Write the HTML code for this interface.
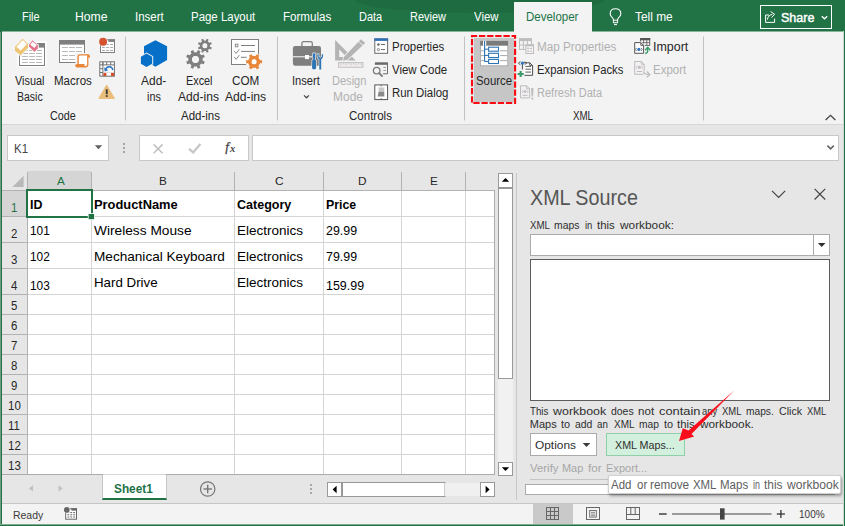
<!DOCTYPE html>
<html>
<head>
<meta charset="utf-8">
<title>Excel - XML Source</title>
<style>
*{box-sizing:border-box;margin:0;padding:0}
html,body{width:845px;height:526px;overflow:hidden}
body{font-family:"Liberation Sans",sans-serif;font-size:13px;color:#262626;background:#e6e6e6;position:relative}
.a{position:absolute}
.t{position:absolute;white-space:nowrap;line-height:1;transform-origin:0 0;display:block}
svg{position:absolute;left:0;top:0}
</style>
</head>
<body>
<div class="a" style="left:0;top:0;width:845px;height:31px;background:#217346"></div>
<div class="a" style="left:355px;top:-13px;width:250px;height:26px;border-radius:50%;background:rgba(0,0,0,0.07)"></div>
<div class="a" style="left:514px;top:2px;width:78px;height:30px;background:#f3f3f3"></div>
<div class="a" style="left:0;top:31px;width:845px;height:93px;background:#f3f3f3"></div>
<div class="a" style="left:0;top:31px;width:514px;height:1px;background:#8ab39c"></div>
<div class="a" style="left:592px;top:31px;width:253px;height:1px;background:#8ab39c"></div>
<div class="a" style="left:0;top:124px;width:845px;height:1px;background:#d6d6d6"></div>
<div class="a" style="left:471px;top:35px;width:45px;height:69px;background:#e4e9e9"></div>
<div class="a" style="left:473.5px;top:37.5px;width:40px;height:64px;background:#c6c6c6"></div>
<div class="a" style="left:7px;top:135px;width:102px;height:26px;background:#fff;border:1px solid #c8c8c8"></div>
<div class="a" style="left:139px;top:135px;width:110px;height:26px;background:#fff;border:1px solid #c8c8c8"></div>
<div class="a" style="left:252px;top:135px;width:587px;height:26px;background:#fff;border:1px solid #c8c8c8"></div>
<div class="a" style="left:28px;top:191px;width:466px;height:283px;background:#fff"></div>
<div class="a" style="left:2px;top:171px;width:492px;height:19px;background:#e6e6e6"></div>
<div class="a" style="left:28px;top:171px;width:63px;height:19px;background:#d5d5d5"></div>
<div class="a" style="left:2px;top:191px;width:25px;height:283px;background:#e6e6e6"></div>
<div class="a" style="left:2px;top:191px;width:25px;height:25px;background:#d5d5d5"></div>
<div class="a" style="left:760px;top:5px;width:72px;height:24px;border:1px solid #fff"></div>
<div class="a" style="left:102px;top:475px;width:65px;height:25px;background:#fff;border-left:1px solid #c6c6c6;border-right:1px solid #c6c6c6;border-bottom:2px solid #217346"></div>
<div class="a" style="left:0;top:503px;width:845px;height:1px;background:#c6c6c6"></div>
<div class="a" style="left:0;top:504px;width:845px;height:22px;background:#f3f3f3"></div>
<div class="a" style="left:533px;top:504px;width:40px;height:20px;background:#c9c9c9"></div>
<div class="a" style="left:530px;top:234px;width:300px;height:22px;background:#fff;border:1px solid #ababab"></div>
<div class="a" style="left:530px;top:259px;width:300px;height:142px;background:#fff;border:1px solid #5c5c5c"></div>
<div class="a" style="left:530px;top:433px;width:67px;height:23px;background:#fff;border:1px solid #ababab"></div>
<div class="a" style="left:606px;top:433px;width:79px;height:23px;background:#d3efde;border:1px solid #8fcfa9"></div>
<div class="a" style="left:525px;top:484px;width:310px;height:11px;background:#fff;border:1px solid #ababab"></div>
<svg width="845" height="526" viewBox="0 0 845 526">
<line x1="91.5" y1="191" x2="91.5" y2="474" stroke="#d4d4d4" stroke-width="1"/>
<line x1="234.5" y1="191" x2="234.5" y2="474" stroke="#d4d4d4" stroke-width="1"/>
<line x1="323.5" y1="191" x2="323.5" y2="474" stroke="#d4d4d4" stroke-width="1"/>
<line x1="401.5" y1="191" x2="401.5" y2="474" stroke="#d4d4d4" stroke-width="1"/>
<line x1="465.5" y1="191" x2="465.5" y2="474" stroke="#d4d4d4" stroke-width="1"/>
<line x1="28" y1="216.5" x2="494" y2="216.5" stroke="#d4d4d4" stroke-width="1"/>
<line x1="28" y1="242.5" x2="494" y2="242.5" stroke="#d4d4d4" stroke-width="1"/>
<line x1="28" y1="268.5" x2="494" y2="268.5" stroke="#d4d4d4" stroke-width="1"/>
<line x1="28" y1="294.5" x2="494" y2="294.5" stroke="#d4d4d4" stroke-width="1"/>
<line x1="28" y1="314.5" x2="494" y2="314.5" stroke="#d4d4d4" stroke-width="1"/>
<line x1="28" y1="334.5" x2="494" y2="334.5" stroke="#d4d4d4" stroke-width="1"/>
<line x1="28" y1="354.5" x2="494" y2="354.5" stroke="#d4d4d4" stroke-width="1"/>
<line x1="28" y1="374.5" x2="494" y2="374.5" stroke="#d4d4d4" stroke-width="1"/>
<line x1="28" y1="394.5" x2="494" y2="394.5" stroke="#d4d4d4" stroke-width="1"/>
<line x1="28" y1="414.5" x2="494" y2="414.5" stroke="#d4d4d4" stroke-width="1"/>
<line x1="28" y1="434.5" x2="494" y2="434.5" stroke="#d4d4d4" stroke-width="1"/>
<line x1="28" y1="454.5" x2="494" y2="454.5" stroke="#d4d4d4" stroke-width="1"/>
<line x1="91.5" y1="172" x2="91.5" y2="190" stroke="#b2b2b2" stroke-width="1"/>
<line x1="234.5" y1="172" x2="234.5" y2="190" stroke="#b2b2b2" stroke-width="1"/>
<line x1="323.5" y1="172" x2="323.5" y2="190" stroke="#b2b2b2" stroke-width="1"/>
<line x1="401.5" y1="172" x2="401.5" y2="190" stroke="#b2b2b2" stroke-width="1"/>
<line x1="465.5" y1="172" x2="465.5" y2="190" stroke="#b2b2b2" stroke-width="1"/>
<line x1="2" y1="216.5" x2="27" y2="216.5" stroke="#b2b2b2" stroke-width="1"/>
<line x1="2" y1="242.5" x2="27" y2="242.5" stroke="#b2b2b2" stroke-width="1"/>
<line x1="2" y1="268.5" x2="27" y2="268.5" stroke="#b2b2b2" stroke-width="1"/>
<line x1="2" y1="294.5" x2="27" y2="294.5" stroke="#b2b2b2" stroke-width="1"/>
<line x1="2" y1="314.5" x2="27" y2="314.5" stroke="#b2b2b2" stroke-width="1"/>
<line x1="2" y1="334.5" x2="27" y2="334.5" stroke="#b2b2b2" stroke-width="1"/>
<line x1="2" y1="354.5" x2="27" y2="354.5" stroke="#b2b2b2" stroke-width="1"/>
<line x1="2" y1="374.5" x2="27" y2="374.5" stroke="#b2b2b2" stroke-width="1"/>
<line x1="2" y1="394.5" x2="27" y2="394.5" stroke="#b2b2b2" stroke-width="1"/>
<line x1="2" y1="414.5" x2="27" y2="414.5" stroke="#b2b2b2" stroke-width="1"/>
<line x1="2" y1="434.5" x2="27" y2="434.5" stroke="#b2b2b2" stroke-width="1"/>
<line x1="2" y1="454.5" x2="27" y2="454.5" stroke="#b2b2b2" stroke-width="1"/>
<line x1="2" y1="474.5" x2="27" y2="474.5" stroke="#b2b2b2" stroke-width="1"/>
<line x1="2" y1="190.5" x2="495" y2="190.5" stroke="#b2b2b2" stroke-width="1"/>
<line x1="27.5" y1="172" x2="27.5" y2="475" stroke="#b2b2b2" stroke-width="1"/>
<line x1="494.5" y1="190" x2="494.5" y2="475" stroke="#ababab" stroke-width="1"/>
<line x1="2" y1="474.5" x2="495" y2="474.5" stroke="#ababab" stroke-width="1"/>
<rect x="472" y="36" width="43.1" height="67" fill="none" stroke="#fb0a12" stroke-width="2.1" stroke-dasharray="6.29 1.8656" stroke-dashoffset="1.2"/>
<polygon points="12.4,187 23.6,187 23.6,175.8" fill="#b8b8b8"/>
<rect x="27" y="190" width="65" height="27" fill="none" stroke="#217346" stroke-width="2" />
<rect x="87.8" y="213.2" width="7" height="7" fill="#fff" />
<rect x="88.6" y="214" width="5.5" height="5.2" fill="#217346" />
<line x1="125.5" y1="36.5" x2="125.5" y2="120.5" stroke="#c2c2c2" stroke-width="1"/>
<line x1="277.5" y1="36.5" x2="277.5" y2="120.5" stroke="#c2c2c2" stroke-width="1"/>
<line x1="464.5" y1="36.5" x2="464.5" y2="120.5" stroke="#c2c2c2" stroke-width="1"/>
<line x1="703.5" y1="36.5" x2="703.5" y2="120.5" stroke="#c2c2c2" stroke-width="1"/>
<rect x="498.5" y="173.5" width="14" height="14" fill="#fff" stroke="#999" stroke-width="1" />
<polygon points="501.8,181.8 509.2,181.8 505.5,178" fill="#000"/>
<rect x="498.5" y="188.5" width="14" height="190" fill="#fff" stroke="#999" stroke-width="1" />
<rect x="498" y="379" width="15" height="83" fill="#f1f1f1" />
<rect x="498.5" y="462.5" width="14" height="13" fill="#fff" stroke="#999" stroke-width="1" />
<polygon points="501.8,467.2 509.2,467.2 505.5,471" fill="#000"/>
<line x1="516.5" y1="173" x2="516.5" y2="500" stroke="#c8c8c8" stroke-width="1"/>
<rect x="327.5" y="482.5" width="14" height="14" fill="#fff" stroke="#999" stroke-width="1" />
<polygon points="336.6,485.8 336.6,493.2 332.6,489.5" fill="#000"/>
<rect x="342.5" y="482.5" width="102.5" height="14" fill="#fff" stroke="#999" stroke-width="1" />
<rect x="445" y="483" width="35" height="13" fill="#f0f0f0" />
<rect x="480.5" y="482.5" width="14" height="14" fill="#fff" stroke="#999" stroke-width="1" />
<polygon points="485.6,485.8 485.6,493.2 489.6,489.5" fill="#000"/>
<line x1="103" y1="474.5" x2="166" y2="474.5" stroke="#d6d6d6" stroke-width="1"/>
<polygon points="33,485.3 33,491.5 28.8,488.4" fill="#c0c0c0"/>
<polygon points="58.5,485.3 58.5,491.5 62.7,488.4" fill="#c0c0c0"/>
<circle cx="207.7" cy="489" r="7.2" fill="none" stroke="#767676" stroke-width="1.2"/>
<line x1="203.5" y1="489" x2="212" y2="489" stroke="#767676" stroke-width="1.4"/>
<line x1="207.7" y1="484.8" x2="207.7" y2="493.2" stroke="#767676" stroke-width="1.4"/>
<line x1="813.5" y1="235" x2="813.5" y2="255" stroke="#ababab" stroke-width="1"/>
<polygon points="817.9,243 825.5,243 821.7,247" fill="#2e2e2e"/>
<polygon points="582.7,443 590.3,443 586.5,447" fill="#3b3b3b"/>
<line x1="530" y1="479.5" x2="830" y2="479.5" stroke="#c4c4c4" stroke-width="1"/>
<rect x="18.5" y="42.5" width="27" height="23.5" fill="#fff" stroke="#fff" stroke-width="2"/>
<rect x="19.5" y="43.5" width="25" height="22" fill="#fff" stroke="#7f7f7f" stroke-width="1"/>
<rect x="38.4" y="43" width="6.6" height="4.6" fill="#7f7f7f"/>
<line x1="22" y1="50.5" x2="27.8" y2="50.5" stroke="#b8b8b8" stroke-width="1"/>
<line x1="29.2" y1="50.5" x2="34.9" y2="50.5" stroke="#b8b8b8" stroke-width="1"/>
<line x1="36.1" y1="50.5" x2="42" y2="50.5" stroke="#b8b8b8" stroke-width="1"/>
<line x1="22" y1="53.5" x2="27.8" y2="53.5" stroke="#b8b8b8" stroke-width="1"/>
<line x1="29.2" y1="53.5" x2="34.9" y2="53.5" stroke="#b8b8b8" stroke-width="1"/>
<line x1="36.1" y1="53.5" x2="42" y2="53.5" stroke="#b8b8b8" stroke-width="1"/>
<line x1="22" y1="56.5" x2="27.8" y2="56.5" stroke="#b8b8b8" stroke-width="1"/>
<line x1="29.2" y1="56.5" x2="34.9" y2="56.5" stroke="#b8b8b8" stroke-width="1"/>
<line x1="36.1" y1="56.5" x2="42" y2="56.5" stroke="#b8b8b8" stroke-width="1"/>
<line x1="22" y1="59.5" x2="27.8" y2="59.5" stroke="#b8b8b8" stroke-width="1"/>
<line x1="29.2" y1="59.5" x2="34.9" y2="59.5" stroke="#b8b8b8" stroke-width="1"/>
<line x1="36.1" y1="59.5" x2="42" y2="59.5" stroke="#b8b8b8" stroke-width="1"/>
<line x1="22" y1="62.5" x2="27.8" y2="62.5" stroke="#b8b8b8" stroke-width="1"/>
<line x1="29.2" y1="62.5" x2="34.9" y2="62.5" stroke="#b8b8b8" stroke-width="1"/>
<line x1="36.1" y1="62.5" x2="42" y2="62.5" stroke="#b8b8b8" stroke-width="1"/>
<polygon points="15.00,46.80 22.60,38.80 28.10,43.90 28.10,47.80 20.65,55.30 15.00,50.70" fill="#f3f3f3" stroke="#f3f3f3" stroke-width="1.6"/>
<polygon points="15.00,46.80 22.60,38.80 28.10,43.90 28.10,47.80 20.65,55.30 15.00,50.70" fill="#eec572"/>
<polygon points="16.40,46.70 22.60,40.00 27.00,44.00 20.65,50.40" fill="#fff"/>
<polygon points="29.00,44.65 32.40,40.25 37.80,45.00 37.80,48.20 34.50,51.90 29.00,46.40" fill="#f3f3f3" stroke="#fff" stroke-width="1.4"/>
<polygon points="29.00,44.65 32.40,40.25 37.80,45.00 37.80,48.20 34.50,51.90 29.00,46.40" fill="#e5708b"/>
<polygon points="30.20,44.70 32.50,41.60 36.80,45.10 34.40,47.90" fill="#fff"/>
<rect x="59.5" y="40.5" width="25" height="22" fill="#fff" stroke="#7f7f7f"/>
<rect x="59" y="40" width="26" height="4.6" fill="#7f7f7f"/>
<line x1="62" y1="47.5" x2="67.9" y2="47.5" stroke="#b8b8b8" stroke-width="1"/>
<line x1="69" y1="47.5" x2="74.9" y2="47.5" stroke="#b8b8b8" stroke-width="1"/>
<line x1="76" y1="47.5" x2="82" y2="47.5" stroke="#b8b8b8" stroke-width="1"/>
<line x1="62" y1="51.5" x2="67.9" y2="51.5" stroke="#b8b8b8" stroke-width="1"/>
<line x1="69" y1="51.5" x2="74.9" y2="51.5" stroke="#b8b8b8" stroke-width="1"/>
<line x1="76" y1="51.5" x2="82" y2="51.5" stroke="#b8b8b8" stroke-width="1"/>
<line x1="62" y1="55.5" x2="67.9" y2="55.5" stroke="#b8b8b8" stroke-width="1"/>
<line x1="69" y1="55.5" x2="74.9" y2="55.5" stroke="#b8b8b8" stroke-width="1"/>
<line x1="76" y1="55.5" x2="82" y2="55.5" stroke="#b8b8b8" stroke-width="1"/>
<line x1="62" y1="59.5" x2="67.9" y2="59.5" stroke="#b8b8b8" stroke-width="1"/>
<line x1="69" y1="59.5" x2="74.9" y2="59.5" stroke="#b8b8b8" stroke-width="1"/>
<line x1="76" y1="59.5" x2="82" y2="59.5" stroke="#b8b8b8" stroke-width="1"/>
<rect x="75.5" y="53" width="15.5" height="15.5" fill="#f3f3f3"/>
<path d="M77.4 56.4 Q77.4 54.2 79.6 54.2 L88 54.2 Q90 54.2 90 56.2 L90 57.6 L88.4 57.6 L88.4 65 Q88.4 67.4 86 67.4 L77 67.4 Q75.1 67.4 75.1 65.6 Q75.1 64 77 64 L77.4 64 Z" fill="#e8873a"/>
<path d="M78.8 57 Q78.8 55.6 80.2 55.6 L87.1 55.6 L87.1 64.6 Q87.1 66 85.8 66 L84.4 66 Q85 65.2 84.4 64 L78.8 64 Z" fill="#fff"/>
<rect x="100.5" y="39.8" width="14" height="12.7" fill="#fff" stroke="#7f7f7f"/>
<rect x="108.3" y="39.3" width="6.7" height="2.6" fill="#7f7f7f"/>
<line x1="102" y1="44.5" x2="104.8" y2="44.5" stroke="#a8a8a8" stroke-width="1"/>
<line x1="106.2" y1="44.5" x2="108.8" y2="44.5" stroke="#a8a8a8" stroke-width="1"/>
<line x1="110.1" y1="44.5" x2="113" y2="44.5" stroke="#a8a8a8" stroke-width="1"/>
<line x1="102" y1="47.5" x2="104.8" y2="47.5" stroke="#a8a8a8" stroke-width="1"/>
<line x1="106.2" y1="47.5" x2="108.8" y2="47.5" stroke="#a8a8a8" stroke-width="1"/>
<line x1="110.1" y1="47.5" x2="113" y2="47.5" stroke="#a8a8a8" stroke-width="1"/>
<line x1="102" y1="50.5" x2="104.8" y2="50.5" stroke="#a8a8a8" stroke-width="1"/>
<line x1="106.2" y1="50.5" x2="108.8" y2="50.5" stroke="#a8a8a8" stroke-width="1"/>
<line x1="110.1" y1="50.5" x2="113" y2="50.5" stroke="#a8a8a8" stroke-width="1"/>
<circle cx="103.1" cy="41.8" r="4.7" fill="#f3f3f3"/>
<circle cx="103.1" cy="41.8" r="3.95" fill="#d5532f"/>
<rect x="99.8" y="61.8" width="14.6" height="14.4" fill="#fff" stroke="#707070"/>
<line x1="102.9" y1="62" x2="102.9" y2="65" stroke="#707070"/>
<line x1="106.7" y1="62" x2="106.7" y2="65" stroke="#707070"/>
<line x1="110.7" y1="62" x2="110.7" y2="65" stroke="#707070"/>
<line x1="100" y1="64.9" x2="114.5" y2="64.9" stroke="#707070"/>
<line x1="102.9" y1="62" x2="102.9" y2="76" stroke="#707070"/>
<line x1="100" y1="68.7" x2="103" y2="68.7" stroke="#707070"/>
<line x1="100" y1="72.5" x2="103" y2="72.5" stroke="#707070"/>
<rect x="103.4" y="72.9" width="3" height="3" fill="#d84a20"/>
<rect x="111" y="72.9" width="3" height="3" fill="#d84a20"/>
<line x1="103.4" y1="72.6" x2="114" y2="72.6" stroke="#c8c8c8" stroke-width="0.6"/>
<path d="M105.3 69.7 Q106.5 66.6 109.5 66.7 Q112.3 66.9 112.9 70.2" fill="none" stroke="#2e74c0" stroke-width="1.5"/>
<polygon points="104.2,67.3 104.6,71.4 108.3,70.3" fill="#2e74c0"/>
<path d="M106.65 85.6 L114.1 98.3 L99.2 98.3 Z" fill="#eabe7a" stroke="#eabe7a" stroke-width="1.4" stroke-linejoin="round"/>
<rect x="105.8" y="89.3" width="1.9" height="4.9" fill="#3a3a3a"/>
<rect x="105.8" y="95.2" width="1.9" height="1.7" fill="#3a3a3a"/>
<polygon points="155.40,40.15 167.10,46.30 167.10,60.00 155.40,66.70 144.00,60.00 144.00,46.30" fill="#0670c9"/>
<polygon points="146.50,53.60 152.20,56.80 152.20,63.70 146.50,67.00 140.90,63.70 140.90,56.80" fill="#f3f3f3" stroke="#f3f3f3" stroke-width="2"/>
<polygon points="146.50,53.60 152.20,56.80 152.20,63.70 146.50,67.00 140.90,63.70 140.90,56.80" fill="#0670c9"/>
<path d="M202.40 60.60 L204.80 61.79 L203.76 64.29 L201.23 63.43 L199.53 65.13 L200.39 67.66 L197.89 68.70 L196.70 66.30 L194.30 66.30 L193.11 68.70 L190.61 67.66 L191.47 65.13 L189.77 63.43 L187.24 64.29 L186.20 61.79 L188.60 60.60 L188.60 58.20 L186.20 57.01 L187.24 54.51 L189.77 55.37 L191.47 53.67 L190.61 51.14 L193.11 50.10 L194.30 52.50 L196.70 52.50 L197.89 50.10 L200.39 51.14 L199.53 53.67 L201.23 55.37 L203.76 54.51 L204.80 57.01 L202.40 58.20Z M199.20 59.40 A3.7 3.7 0 1 0 191.80 59.40 A3.7 3.7 0 1 0 199.20 59.40Z" fill="#7f7f7f" fill-rule="evenodd"/>
<circle cx="195.5" cy="59.4" r="5.35" fill="none" stroke="#7f7f7f" stroke-width="3.30"/>
<path d="M209.92 46.68 L211.87 47.59 L211.10 49.47 L209.07 48.73 L207.83 49.97 L208.57 52.00 L206.69 52.77 L205.78 50.82 L204.02 50.82 L203.11 52.77 L201.23 52.00 L201.97 49.97 L200.73 48.73 L198.70 49.47 L197.93 47.59 L199.88 46.68 L199.88 44.92 L197.93 44.01 L198.70 42.13 L200.73 42.87 L201.97 41.63 L201.23 39.60 L203.11 38.83 L204.02 40.78 L205.78 40.78 L206.69 38.83 L208.57 39.60 L207.83 41.63 L209.07 42.87 L211.10 42.13 L211.87 44.01 L209.92 44.92Z M207.60 45.80 A2.7 2.7 0 1 0 202.20 45.80 A2.7 2.7 0 1 0 207.60 45.80Z" fill="#7f7f7f" fill-rule="evenodd"/>
<circle cx="204.9" cy="45.8" r="3.90" fill="none" stroke="#7f7f7f" stroke-width="2.40"/>
<rect x="231.5" y="39.5" width="27" height="25" fill="#fff" stroke="#7f7f7f"/>
<rect x="235.3" y="44.2" width="2.6" height="2.6" fill="none" stroke="#7f7f7f" stroke-width="0.9"/>
<line x1="241" y1="45.5" x2="255" y2="45.5" stroke="#7f7f7f" stroke-width="1"/>
<line x1="241" y1="51.4" x2="255" y2="51.4" stroke="#7f7f7f" stroke-width="1"/>
<line x1="241" y1="57.3" x2="246.7" y2="57.3" stroke="#7f7f7f" stroke-width="1"/>
<polyline points="234.2,51.0 236.1,53.4 239.3,49.3" fill="none" stroke="#7f7f7f" stroke-width="0.9"/>
<polyline points="234.2,56.9 236.1,59.3 239.3,55.2" fill="none" stroke="#7f7f7f" stroke-width="0.9"/>
<circle cx="254.1" cy="61.75" r="8.6" fill="#f3f3f3"/>
<rect x="247" y="54" width="11.4" height="10" fill="#fff"/>
<path d="M247 64.5 L247 53.8 L258.5 53.8" fill="none" stroke="none"/>
<path d="M259.78 60.16 L262.07 60.32 L262.07 63.18 L259.78 63.34 L258.32 65.88 L259.33 67.94 L256.84 69.37 L255.57 67.46 L252.63 67.46 L251.36 69.37 L248.87 67.94 L249.88 65.88 L248.42 63.34 L246.13 63.18 L246.13 60.32 L248.42 60.16 L249.88 57.62 L248.87 55.56 L251.36 54.13 L252.63 56.04 L255.57 56.04 L256.84 54.13 L259.33 55.56 L258.32 57.62Z M256.80 61.75 A2.7 2.7 0 1 0 251.40 61.75 A2.7 2.7 0 1 0 256.80 61.75Z" fill="#e8873a" fill-rule="evenodd"/>
<circle cx="254.1" cy="61.75" r="4.30" fill="none" stroke="#e8873a" stroke-width="3.20"/>
<path d="M301.9 46.6 L301.9 43.4 Q301.9 41.7 303.6 41.7 L310.6 41.7 Q312.3 41.7 312.3 43.4 L312.3 46.6" fill="none" stroke="#7f7f7f" stroke-width="1.3"/>
<rect x="292.9" y="46.1" width="28.1" height="19.6" rx="2.2" fill="#7f7f7f"/>
<line x1="292.9" y1="56.8" x2="312" y2="56.8" stroke="#fff" stroke-width="1"/>
<rect x="305" y="55" width="4" height="4.1" fill="#fff"/>
<rect x="311" y="52.8" width="13" height="17.2" fill="#f3f3f3" opacity="0"/>
<path d="M312.6 54.2 L313.4 53.2 L314.8 53.2 L315.6 54.2 L315.2 56.4 L314.9 59.6 L316 60.6 L316.2 67.8 Q316.2 69.5 314.1 69.5 Q312 69.5 312 67.8 L312.2 60.6 L313.3 59.6 L313 56.4 Z" fill="#2f75b5" stroke="#f3f3f3" stroke-width="1.2" paint-order="stroke"/>
<path d="M317.3 54.2 Q317 58 319.3 59.2 L319.3 69.5 L321.2 69.5 L321.2 59.2 Q323.4 58 323.1 54.2 L321.8 54.2 L321.8 56.8 L320.25 57.8 L318.7 56.8 L318.7 54.2 Z" fill="#2f75b5" stroke="#f3f3f3" stroke-width="1.2" paint-order="stroke"/>
<path d="M335.1 39.9 L335.1 60.5 L355.7 60.5 Z M339.2 49.4 L346.6 57 L339.2 57 Z" fill="#b4b4b4" fill-rule="evenodd"/>
<path d="M342.9 60.7 L343.9 57 L360.9 39.2 L365.2 43 L347.4 59.7 Z" fill="#b4b4b4" stroke="#f3f3f3" stroke-width="1.5" paint-order="stroke"/>
<line x1="358.4" y1="41.4" x2="363" y2="45.4" stroke="#f3f3f3" stroke-width="0.9"/>
<rect x="338.5" y="62.5" width="24.5" height="4.8" fill="#efeaee" stroke="#c4c4c4"/>
<line x1="340.80" y1="63" x2="340.80" y2="65.4" stroke="#c4c4c4" stroke-width="0.9"/>
<line x1="343.35" y1="63" x2="343.35" y2="64.4" stroke="#c4c4c4" stroke-width="0.9"/>
<line x1="345.90" y1="63" x2="345.90" y2="65.4" stroke="#c4c4c4" stroke-width="0.9"/>
<line x1="348.45" y1="63" x2="348.45" y2="64.4" stroke="#c4c4c4" stroke-width="0.9"/>
<line x1="351.00" y1="63" x2="351.00" y2="65.4" stroke="#c4c4c4" stroke-width="0.9"/>
<line x1="353.55" y1="63" x2="353.55" y2="64.4" stroke="#c4c4c4" stroke-width="0.9"/>
<line x1="356.10" y1="63" x2="356.10" y2="65.4" stroke="#c4c4c4" stroke-width="0.9"/>
<line x1="358.65" y1="63" x2="358.65" y2="64.4" stroke="#c4c4c4" stroke-width="0.9"/>
<line x1="361.20" y1="63" x2="361.20" y2="65.4" stroke="#c4c4c4" stroke-width="0.9"/>
<rect x="374.8" y="38.9" width="12.8" height="14.4" fill="#fff" stroke="#6a6a6a"/>
<rect x="374.3" y="38.4" width="13.8" height="2.5" fill="#2f6fb5"/>
<circle cx="378.4" cy="44.5" r="1.3" fill="#6a6a6a"/>
<circle cx="378.4" cy="49.6" r="1.1" fill="#fff" stroke="#6a6a6a" stroke-width="0.8"/>
<line x1="380.9" y1="44.5" x2="385" y2="44.5" stroke="#6a6a6a"/>
<line x1="380.9" y1="49.6" x2="385" y2="49.6" stroke="#6a6a6a"/>
<path d="M375 64 L387.5 64 L387.5 73.8 L383 73.8" fill="none" stroke="#6a6a6a" stroke-width="1"/>
<rect x="374.9" y="62.3" width="13.1" height="2.3" fill="#6a6a6a"/>
<line x1="383.3" y1="67.4" x2="386" y2="67.4" stroke="#9a9a9a"/>
<line x1="383.3" y1="70.4" x2="386" y2="70.4" stroke="#9a9a9a"/>
<circle cx="376.7" cy="70.6" r="3.3" fill="#f3f3f3" stroke="#7a7a7a" stroke-width="1.3"/>
<line x1="379.2" y1="73.2" x2="382" y2="76" stroke="#7a7a7a" stroke-width="1.8" stroke-linecap="round"/>
<rect x="374.8" y="84.9" width="12.8" height="14.7" fill="#fff" stroke="#555"/>
<line x1="381.2" y1="85" x2="381.2" y2="86.3" stroke="#555" stroke-width="0.9"/>
<line x1="381.2" y1="98.2" x2="381.2" y2="99.5" stroke="#555" stroke-width="0.9"/>
<rect x="378.6" y="87.4" width="5.7" height="4.4" fill="#c9c9c9"/>
<path d="M378.6 91.8 L384.3 91.8 L384.3 96.4 L377.6 96.4 Z" fill="#8a8a8a"/>
<rect x="480.4" y="41.2" width="27.4" height="24.6" fill="#fff" stroke="#a0a0a0" stroke-width="0.8"/>
<rect x="480.2" y="41" width="27.8" height="4.7" fill="#7a7a7a"/>
<rect x="483" y="40.8" width="3.2" height="5" fill="#fff"/>
<line x1="480.8" y1="50.8" x2="484" y2="50.8" stroke="#a0a0a0" stroke-width="0.9"/>
<line x1="500" y1="50.8" x2="507.4" y2="50.8" stroke="#a0a0a0" stroke-width="0.9"/>
<line x1="480.8" y1="55.6" x2="484" y2="55.6" stroke="#a0a0a0" stroke-width="0.9"/>
<line x1="500" y1="55.6" x2="507.4" y2="55.6" stroke="#a0a0a0" stroke-width="0.9"/>
<line x1="480.8" y1="60.6" x2="484" y2="60.6" stroke="#a0a0a0" stroke-width="0.9"/>
<line x1="500" y1="60.6" x2="507.4" y2="60.6" stroke="#a0a0a0" stroke-width="0.9"/>
<line x1="484.6" y1="41" x2="484.6" y2="61.6" stroke="#2e74b5" stroke-width="1.1"/>
<line x1="484.6" y1="49.20" x2="488.6" y2="49.20" stroke="#2e74b5" stroke-width="1.1"/>
<rect x="488.6" y="47.2" width="9.9" height="4.0" fill="#fff" stroke="#2e74b5" stroke-width="1.1"/>
<line x1="484.6" y1="55.40" x2="488.6" y2="55.40" stroke="#2e74b5" stroke-width="1.1"/>
<rect x="488.6" y="53.3" width="9.9" height="4.2" fill="#fff" stroke="#2e74b5" stroke-width="1.1"/>
<line x1="484.6" y1="61.45" x2="488.6" y2="61.45" stroke="#2e74b5" stroke-width="1.1"/>
<rect x="488.6" y="59.4" width="9.9" height="4.1" fill="#fff" stroke="#2e74b5" stroke-width="1.1"/>
<rect x="519.5" y="38.8" width="12" height="10.6" fill="#f3f3f3" stroke="#bdbdbd"/>
<rect x="519" y="38.3" width="13" height="2.8" fill="#bdbdbd"/>
<line x1="523.4" y1="41" x2="523.4" y2="49.4" stroke="#bdbdbd"/>
<line x1="519.5" y1="45" x2="525" y2="45" stroke="#bdbdbd"/>
<line x1="527.5" y1="41" x2="527.5" y2="44" stroke="#bdbdbd"/>
<rect x="525.9" y="44.9" width="7.6" height="8.6" fill="#f6f2f6" stroke="#bdbdbd"/>
<rect x="525.4" y="44.4" width="8.6" height="1.9" fill="#bdbdbd"/>
<rect x="527.3" y="47.6" width="1.5" height="1.5" fill="#bdbdbd"/>
<rect x="527.3" y="50.4" width="1.5" height="1.5" fill="#bdbdbd"/>
<line x1="529.6" y1="48.4" x2="532" y2="48.4" stroke="#bdbdbd"/>
<line x1="529.6" y1="51.2" x2="532" y2="51.2" stroke="#bdbdbd"/>
<path d="M524 63.2 L524 62.8 L529.8 62.8 L532.6 65.6 L532.6 75.3 L524.4 75.3" fill="#fff" stroke="#4a4a4a" stroke-width="1"/>
<path d="M529.8 62.8 L529.8 65.6 L532.6 65.6" fill="none" stroke="#4a4a4a" stroke-width="0.9"/>
<line x1="525.4" y1="66.4" x2="531" y2="66.4" stroke="#4a4a4a" stroke-width="0.9"/>
<line x1="525.4" y1="69.2" x2="531" y2="69.2" stroke="#4a4a4a" stroke-width="0.9"/>
<line x1="525.4" y1="72.1" x2="531" y2="72.1" stroke="#4a4a4a" stroke-width="0.9"/>
<line x1="522.4" y1="64" x2="522.4" y2="69.4" stroke="#4a4a4a" stroke-width="1"/>
<polyline points="520.4,61.6 518.4,63.2 520.4,64.8" fill="none" stroke="#4a4a4a" stroke-width="0.9"/>
<polyline points="524.6,61.6 526.6,63.2 524.6,64.8" fill="none" stroke="#4a4a4a" stroke-width="0.9"/>
<circle cx="522.4" cy="63.1" r="1.7" fill="#2e74c0"/>
<path d="M519.6 71 h2.1 v2 h2 v2.1 h-2 v2 h-2.1 v-2 h-2 v-2.1 h2 Z" fill="#3a9a6a"/>
<path d="M520.5 85.8 L526.6 85.8 L529.6 88.8 L529.6 97.9 L520.5 97.9 Z" fill="#f3eff3" stroke="#bdbdbd"/>
<path d="M526.6 85.8 L526.6 88.8 L529.6 88.8" fill="none" stroke="#bdbdbd" stroke-width="0.9"/>
<circle cx="525" cy="91.6" r="1.4" fill="#bdbdbd"/>
<polyline points="523,90.2 521.8,91.6 523,93" fill="none" stroke="#bdbdbd" stroke-width="0.8"/>
<polyline points="527,90.2 528.2,91.6 527,93" fill="none" stroke="#bdbdbd" stroke-width="0.8"/>
<line x1="522.6" y1="95.4" x2="527.4" y2="95.4" stroke="#bdbdbd"/>
<path d="M531.1 88 L533.5 88 L533.1 96.6 L531.5 96.6 Z" fill="#bdbdbd"/>
<rect x="531.4" y="97.7" width="1.9" height="1.8" fill="#bdbdbd"/>
<rect x="640.7" y="38.5" width="9" height="6.8" fill="#fff" stroke="#555" stroke-width="0.9"/>
<rect x="640.2" y="38" width="10" height="2.3" fill="#555"/>
<line x1="643.6" y1="40" x2="643.6" y2="45.3" stroke="#555" stroke-width="0.8"/>
<line x1="646.8" y1="40" x2="646.8" y2="45.3" stroke="#555" stroke-width="0.8"/>
<line x1="640.7" y1="42.6" x2="649.7" y2="42.6" stroke="#555" stroke-width="0.8"/>
<path d="M634.7 42.6 L640.8 42.6 L643.6 45.4 L643.6 53.3 L634.7 53.3 Z" fill="#fff" stroke="#f3f3f3" stroke-width="2.4"/>
<path d="M634.7 42.6 L640.8 42.6 L643.6 45.4 L643.6 53.3 L634.7 53.3 Z" fill="#fff" stroke="#555" stroke-width="1"/>
<path d="M640.8 42.6 L640.8 45.4 L643.6 45.4" fill="none" stroke="#555" stroke-width="0.9"/>
<circle cx="638.9" cy="49.4" r="1.6" fill="#2e74c0"/>
<polyline points="636.6,47.9 635.6,49.4 636.6,50.9" fill="none" stroke="#555" stroke-width="0.8"/>
<polyline points="641.2,47.9 642.2,49.4 641.2,50.9" fill="none" stroke="#555" stroke-width="0.8"/>
<path d="M645.2 53.5 Q647.7 53.2 647.7 50.8 L647.7 47.8" fill="none" stroke="#3a9a6a" stroke-width="1.4"/>
<polyline points="645.1,50.2 647.7,47.2 650.3,50.2" fill="none" stroke="#3a9a6a" stroke-width="1.4"/>
<path d="M634.7 61.5 L641.4 61.5 L644.2 64.3 L644.2 74.3 L634.7 74.3 Z" fill="#f3eff3" stroke="#bdbdbd"/>
<path d="M641.4 61.5 L641.4 64.3 L644.2 64.3" fill="none" stroke="#bdbdbd" stroke-width="0.9"/>
<circle cx="639.4" cy="67.2" r="1.5" fill="#bdbdbd"/>
<polyline points="637.2,65.7 636.2,67.2 637.2,68.7" fill="none" stroke="#bdbdbd" stroke-width="0.8"/>
<polyline points="641.6,65.7 642.6,67.2 641.6,68.7" fill="none" stroke="#bdbdbd" stroke-width="0.8"/>
<line x1="637" y1="71.5" x2="642" y2="71.5" stroke="#bdbdbd"/>
<path d="M643.4 71.6 Q644 74.4 648.8 74.4" fill="none" stroke="#f3f3f3" stroke-width="3"/>
<path d="M643.4 71.6 Q644 74.4 648.8 74.4" fill="none" stroke="#bdbdbd" stroke-width="1.3"/>
<polyline points="646.8,71.6 649.8,74.4 646.8,77.2" fill="none" stroke="#bdbdbd" stroke-width="1.3"/>
<polyline points="825.6,120 830.5,115.4 835.4,120" fill="none" stroke="#444" stroke-width="1.3"/>
<polyline points="304,95.4 306.5,97.8 309,95.4" fill="none" stroke="#444" stroke-width="1.2"/>
<path d="M613.4 20.2 L613.4 19.4 Q612.6 17.6 611.4 16.6 Q610.2 15.4 610.2 13.8 Q610.2 8.8 615.5 8.8 Q620.8 8.8 620.8 13.8 Q620.8 15.4 619.6 16.6 Q618.4 17.6 617.6 19.4 L617.6 20.2" fill="none" stroke="#fff" stroke-width="1.1"/>
<rect x="613.4" y="20.2" width="4.2" height="2.5" fill="none" stroke="#fff" stroke-width="1"/>
<line x1="614" y1="24.6" x2="617" y2="24.6" stroke="#fff" stroke-width="1"/>
<path d="M769 15 L765.6 15 L765.6 22.4 L774.6 22.4 L774.6 18.6" fill="none" stroke="#fff" stroke-width="1"/>
<path d="M767.4 19.6 Q767.8 15.2 772.4 14.4" fill="none" stroke="#fff" stroke-width="1"/>
<polyline points="770.6,11.6 774.6,14.2 771.6,17.6" fill="none" stroke="#fff" stroke-width="1"/>
<polyline points="821.8,16.2 824.5,18.8 827.2,16.2" fill="none" stroke="#fff" stroke-width="1.3"/>
<polygon points="94.8,145.2 102.2,145.2 98.5,149.2" fill="#606060"/>
<rect x="123" y="143" width="2" height="2" fill="#a3a3a3"/>
<rect x="123" y="147" width="2" height="2" fill="#a3a3a3"/>
<rect x="123" y="151" width="2" height="2" fill="#a3a3a3"/>
<path d="M153.6 144.4 L162.6 153.2 M162.6 144.4 L153.6 153.2" stroke="#c0c0c0" stroke-width="1.5" fill="none"/>
<polyline points="189,148.8 193.2,152.4 200.4,144" fill="none" stroke="#c6c6c6" stroke-width="2.3"/>
<polyline points="827.4,145.6 830.6,148.8 833.8,145.6" fill="none" stroke="#666" stroke-width="1.6"/>
<rect x="310" y="484" width="2" height="2" fill="#a8a8a8"/>
<rect x="310" y="488" width="2" height="2" fill="#a8a8a8"/>
<rect x="310" y="492" width="2" height="2" fill="#a8a8a8"/>
<rect x="65.7" y="508.8" width="10.8" height="10.4" fill="#fff" stroke="#666"/>
<rect x="71.4" y="508.3" width="5.6" height="2.3" fill="#666"/>
<rect x="67.4" y="512.1" width="1.9" height="1" fill="#666"/>
<rect x="70.3" y="512.1" width="1.9" height="1" fill="#666"/>
<rect x="73.2" y="512.1" width="1.9" height="1" fill="#666"/>
<rect x="67.4" y="514.3" width="1.9" height="1" fill="#666"/>
<rect x="70.3" y="514.3" width="1.9" height="1" fill="#666"/>
<rect x="73.2" y="514.3" width="1.9" height="1" fill="#666"/>
<rect x="67.4" y="516.5" width="1.9" height="1" fill="#666"/>
<rect x="70.3" y="516.5" width="1.9" height="1" fill="#666"/>
<rect x="73.2" y="516.5" width="1.9" height="1" fill="#666"/>
<circle cx="66.8" cy="509.9" r="3.3" fill="#f3f3f3"/>
<circle cx="66.8" cy="509.9" r="2.8" fill="#666"/>
<rect x="546.5" y="507.5" width="12" height="12" fill="none" stroke="#666"/>
<line x1="550.5" y1="507.5" x2="550.5" y2="519.5" stroke="#666"/>
<line x1="554.5" y1="507.5" x2="554.5" y2="519.5" stroke="#666"/>
<line x1="546.5" y1="511.5" x2="558.5" y2="511.5" stroke="#666"/>
<line x1="546.5" y1="515.5" x2="558.5" y2="515.5" stroke="#666"/>
<rect x="586.5" y="507.5" width="13" height="12" fill="none" stroke="#666"/>
<rect x="589.7" y="510.5" width="6.6" height="6.6" fill="none" stroke="#666" stroke-width="0.9"/>
<line x1="591" y1="512.4" x2="595" y2="512.4" stroke="#666" stroke-width="0.7"/>
<line x1="591" y1="514" x2="595" y2="514" stroke="#666" stroke-width="0.7"/>
<line x1="591" y1="515.6" x2="595" y2="515.6" stroke="#666" stroke-width="0.7"/>
<rect x="626.5" y="507.5" width="13" height="12" fill="none" stroke="#666"/>
<line x1="626.5" y1="514.5" x2="639.5" y2="514.5" stroke="#666"/>
<line x1="630.8" y1="507.5" x2="630.8" y2="514.5" stroke="#666"/>
<line x1="635.2" y1="507.5" x2="635.2" y2="514.5" stroke="#666"/>
<line x1="659" y1="514" x2="666.7" y2="514" stroke="#333" stroke-width="1.4"/>
<line x1="672" y1="514" x2="771.6" y2="514" stroke="#444" stroke-width="1.1"/>
<rect x="720" y="508.3" width="4.6" height="11.3" fill="#444"/>
<line x1="776.8" y1="514" x2="784.9" y2="514" stroke="#333" stroke-width="1.3"/>
<line x1="780.9" y1="510" x2="780.9" y2="518" stroke="#333" stroke-width="1.3"/>
<polyline points="772,190.8 778.6,197.4 785.2,190.8" fill="none" stroke="#444" stroke-width="1.2"/>
<path d="M814.6 188.9 L825.2 199.5 M825.2 188.9 L814.6 199.5" stroke="#444" stroke-width="1.2" fill="none"/>
</svg>
<span class="t" style="left:56.66px;top:176.00px;font-size:11.8px;color:#217346;transform:scaleX(0.9962);">A</span>
<span class="t" style="left:159.16px;top:176.00px;font-size:11.8px;color:#262626;transform:scaleX(0.9962);">B</span>
<span class="t" style="left:274.84px;top:176.00px;font-size:11.8px;color:#262626;transform:scaleX(1.0026);">C</span>
<span class="t" style="left:358.34px;top:176.00px;font-size:11.8px;color:#262626;transform:scaleX(1.0026);">D</span>
<span class="t" style="left:429.66px;top:176.00px;font-size:11.8px;color:#262626;transform:scaleX(0.9962);">E</span>
<span class="t" style="left:10.90px;top:202.00px;font-size:12.5px;color:#217346;transform:scaleX(0.9136);">1</span>
<span class="t" style="left:10.90px;top:228.00px;font-size:12.5px;color:#262626;transform:scaleX(0.9136);">2</span>
<span class="t" style="left:10.90px;top:254.00px;font-size:12.5px;color:#262626;transform:scaleX(0.9136);">3</span>
<span class="t" style="left:10.90px;top:280.00px;font-size:12.5px;color:#262626;transform:scaleX(0.9136);">4</span>
<span class="t" style="left:10.90px;top:300.00px;font-size:12.5px;color:#262626;transform:scaleX(0.9136);">5</span>
<span class="t" style="left:10.90px;top:320.00px;font-size:12.5px;color:#262626;transform:scaleX(0.9136);">6</span>
<span class="t" style="left:10.90px;top:340.00px;font-size:12.5px;color:#262626;transform:scaleX(0.9136);">7</span>
<span class="t" style="left:10.90px;top:360.00px;font-size:12.5px;color:#262626;transform:scaleX(0.9136);">8</span>
<span class="t" style="left:10.90px;top:380.00px;font-size:12.5px;color:#262626;transform:scaleX(0.9136);">9</span>
<span class="t" style="left:7.70px;top:400.00px;font-size:12.5px;color:#262626;transform:scaleX(0.9202);">10</span>
<span class="t" style="left:8.13px;top:420.00px;font-size:12.5px;color:#262626;transform:scaleX(0.9182);">11</span>
<span class="t" style="left:7.70px;top:440.00px;font-size:12.5px;color:#262626;transform:scaleX(0.9202);">12</span>
<span class="t" style="left:7.70px;top:460.00px;font-size:12.5px;color:#262626;transform:scaleX(0.9202);">13</span>
<span class="t" style="left:30.00px;top:198.00px;font-size:13px;font-weight:bold;color:#000;transform:scaleX(0.9538);">ID</span>
<span class="t" style="left:94.20px;top:198.00px;font-size:13px;font-weight:bold;color:#000;transform:scaleX(0.9905);">ProductName</span>
<span class="t" style="left:236.90px;top:198.00px;font-size:13px;font-weight:bold;color:#000;transform:scaleX(0.9627);">Category</span>
<span class="t" style="left:326.00px;top:198.00px;font-size:13px;font-weight:bold;color:#000;transform:scaleX(0.9497);">Price</span>
<span class="t" style="left:30.00px;top:224.00px;font-size:13px;color:#000;transform:scaleX(0.9124);">101</span>
<span class="t" style="left:94.20px;top:224.00px;font-size:13px;color:#000;transform:scaleX(1.0551);">Wireless Mouse</span>
<span class="t" style="left:236.90px;top:224.00px;font-size:13px;color:#000;transform:scaleX(1.0377);">Electronics</span>
<span class="t" style="left:326.00px;top:224.00px;font-size:13px;color:#000;transform:scaleX(0.9538);">29.99</span>
<span class="t" style="left:30.00px;top:250.00px;font-size:13px;color:#000;transform:scaleX(0.9124);">102</span>
<span class="t" style="left:94.20px;top:250.00px;font-size:13px;color:#000;transform:scaleX(1.0456);">Mechanical Keyboard</span>
<span class="t" style="left:236.90px;top:250.00px;font-size:13px;color:#000;transform:scaleX(1.0377);">Electronics</span>
<span class="t" style="left:326.00px;top:250.00px;font-size:13px;color:#000;transform:scaleX(0.9538);">79.99</span>
<span class="t" style="left:30.00px;top:279.00px;font-size:13px;color:#000;transform:scaleX(0.9124);">103</span>
<span class="t" style="left:94.20px;top:276.00px;font-size:13px;color:#000;transform:scaleX(1.0242);">Hard Drive</span>
<span class="t" style="left:236.90px;top:276.00px;font-size:13px;color:#000;transform:scaleX(1.0377);">Electronics</span>
<span class="t" style="left:326.00px;top:279.00px;font-size:13px;color:#000;transform:scaleX(0.9573);">159.99</span>
<span class="t" style="left:22.00px;top:11.00px;font-size:12.3px;color:#fff;transform:scaleX(0.8838);">File</span>
<span class="t" style="left:75.00px;top:11.00px;font-size:12.3px;color:#fff;transform:scaleX(0.9909);">Home</span>
<span class="t" style="left:134.50px;top:11.00px;font-size:12.3px;color:#fff;transform:scaleX(0.9318);">Insert</span>
<span class="t" style="left:191.00px;top:11.00px;font-size:12.3px;color:#fff;transform:scaleX(0.9305);">Page Layout</span>
<span class="t" style="left:282.80px;top:11.00px;font-size:12.3px;color:#fff;transform:scaleX(0.9415);">Formulas</span>
<span class="t" style="left:359.00px;top:11.00px;font-size:12.3px;color:#fff;transform:scaleX(0.8923);">Data</span>
<span class="t" style="left:410.00px;top:11.00px;font-size:12.3px;color:#fff;transform:scaleX(0.8936);">Review</span>
<span class="t" style="left:473.50px;top:11.00px;font-size:12.3px;color:#fff;transform:scaleX(0.9248);">View</span>
<span class="t" style="left:634.50px;top:11.00px;font-size:12.3px;color:#fff;transform:scaleX(0.9667);">Tell me</span>
<span class="t" style="left:526.00px;top:11.00px;font-size:12.3px;color:#217346;transform:scaleX(0.9358);">Developer</span>
<span class="t" style="left:780.60px;top:11.00px;font-size:13.6px;color:#fff;transform:scaleX(0.9229);-webkit-text-stroke:0.45px #fff;">Share</span>
<span class="t" style="left:15.30px;top:75.00px;font-size:12.3px;color:#262626;transform:scaleX(0.8859);">Visual</span>
<span class="t" style="left:17.20px;top:91.00px;font-size:12.3px;color:#262626;transform:scaleX(0.8538);">Basic</span>
<span class="t" style="left:54.30px;top:75.00px;font-size:12.3px;color:#262626;transform:scaleX(0.9380);">Macros</span>
<span class="t" style="left:50.20px;top:110.00px;font-size:12.3px;color:#262626;transform:scaleX(0.8741);">Code</span>
<span class="t" style="left:141.20px;top:75.00px;font-size:12.3px;color:#262626;transform:scaleX(0.9731);">Add-</span>
<span class="t" style="left:147.20px;top:91.00px;font-size:12.3px;color:#262626;transform:scaleX(0.8790);">ins</span>
<span class="t" style="left:186.00px;top:75.00px;font-size:12.3px;color:#262626;transform:scaleX(0.8804);">Excel</span>
<span class="t" style="left:178.10px;top:91.00px;font-size:12.3px;color:#262626;transform:scaleX(0.9856);">Add-ins</span>
<span class="t" style="left:232.00px;top:75.00px;font-size:12.3px;color:#262626;transform:scaleX(0.9512);">COM</span>
<span class="t" style="left:224.90px;top:91.00px;font-size:12.3px;color:#262626;transform:scaleX(0.9880);">Add-ins</span>
<span class="t" style="left:180.70px;top:110.00px;font-size:12.3px;color:#262626;transform:scaleX(0.9353);">Add-ins</span>
<span class="t" style="left:292.30px;top:75.00px;font-size:12.3px;color:#262626;transform:scaleX(0.9058);">Insert</span>
<span class="t" style="left:331.50px;top:75.00px;font-size:12.3px;color:#b1b1b1;transform:scaleX(0.8982);">Design</span>
<span class="t" style="left:333.30px;top:91.00px;font-size:12.3px;color:#b1b1b1;transform:scaleX(0.9740);">Mode</span>
<span class="t" style="left:392.20px;top:41.00px;font-size:12.3px;color:#262626;transform:scaleX(0.9323);">Properties</span>
<span class="t" style="left:392.20px;top:64.00px;font-size:12.3px;color:#262626;transform:scaleX(0.9325);">View Code</span>
<span class="t" style="left:392.20px;top:87.00px;font-size:12.3px;color:#262626;transform:scaleX(0.9278);">Run Dialog</span>
<span class="t" style="left:348.80px;top:110.00px;font-size:12.3px;color:#262626;transform:scaleX(0.9367);">Controls</span>
<span class="t" style="left:475.70px;top:75.00px;font-size:12.3px;color:#262626;transform:scaleX(0.9256);">Source</span>
<span class="t" style="left:536.90px;top:41.00px;font-size:12.3px;color:#b1b1b1;transform:scaleX(0.9508);">Map Properties</span>
<span class="t" style="left:536.90px;top:64.00px;font-size:12.3px;color:#262626;transform:scaleX(0.9153);">Expansion Packs</span>
<span class="t" style="left:536.90px;top:87.00px;font-size:12.3px;color:#b1b1b1;transform:scaleX(0.8979);">Refresh Data</span>
<span class="t" style="left:653.20px;top:41.00px;font-size:12.3px;color:#262626;transform:scaleX(1.0115);">Import</span>
<span class="t" style="left:653.20px;top:64.00px;font-size:12.3px;color:#b1b1b1;transform:scaleX(0.9352);">Export</span>
<span class="t" style="left:572.50px;top:110.00px;font-size:12.3px;color:#262626;transform:scaleX(0.7905);">XML</span>
<span class="t" style="left:225.30px;top:140.31px;font-size:13px;color:#444;-webkit-text-stroke:0.3px #444;font-family:'Liberation Serif',serif;font-style:italic;">f</span>
<span class="t" style="left:230.10px;top:143.81px;font-size:10.5px;font-weight:bold;color:#444;font-family:'Liberation Serif',serif;font-style:italic;">x</span>
<span class="t" style="left:14.40px;top:143.00px;font-size:12.5px;color:#444;transform:scaleX(0.9150);">K1</span>
<span class="t" style="left:114.00px;top:482.00px;font-size:13px;font-weight:bold;color:#217346;transform:scaleX(0.9085);">Sheet1</span>
<span class="t" style="left:13.20px;top:510.00px;font-size:11.8px;color:#3a3a3a;transform:scaleX(0.8856);">Ready</span>
<span class="t" style="left:798.60px;top:509.00px;font-size:11.8px;color:#3a3a3a;transform:scaleX(0.8510);">100%</span>
<span class="t" style="left:530.00px;top:188.00px;font-size:21.5px;color:#555;transform:scaleX(0.9183);">XML Source</span>
<span class="t" style="left:529.80px;top:220.00px;font-size:11px;color:#2e2e2e;transform:scaleX(0.8805);">XML</span>
<span class="t" style="left:554.40px;top:220.00px;font-size:11px;color:#2e2e2e;transform:scaleX(0.9442);">maps</span>
<span class="t" style="left:584.70px;top:220.00px;font-size:11px;color:#2e2e2e;transform:scaleX(0.8605);">in</span>
<span class="t" style="left:596.80px;top:220.00px;font-size:11px;color:#2e2e2e;transform:scaleX(1.0351);">this</span>
<span class="t" style="left:619.71px;top:220.00px;font-size:11px;color:#2e2e2e;transform:scaleX(1.0777);">workbook:</span>
<span class="t" style="left:529.80px;top:406.00px;font-size:11px;color:#2e2e2e;transform:scaleX(0.8846);">This</span>
<span class="t" style="left:553.01px;top:406.00px;font-size:11px;color:#2e2e2e;transform:scaleX(1.1290);">workbook</span>
<span class="t" style="left:610.70px;top:406.00px;font-size:11px;color:#2e2e2e;transform:scaleX(0.9498);">does</span>
<span class="t" style="left:638.10px;top:406.00px;font-size:11px;color:#2e2e2e;transform:scaleX(1.0523);">not</span>
<span class="t" style="left:658.60px;top:406.00px;font-size:11px;color:#2e2e2e;transform:scaleX(1.1690);">contain</span>
<span class="t" style="left:702.00px;top:406.00px;font-size:11px;color:#2e2e2e;transform:scaleX(0.8531);">any</span>
<span class="t" style="left:721.80px;top:406.00px;font-size:11px;color:#2e2e2e;transform:scaleX(0.8584);">XML</span>
<span class="t" style="left:746.10px;top:406.00px;font-size:11px;color:#2e2e2e;transform:scaleX(0.9267);">maps.</span>
<span class="t" style="left:779.20px;top:406.00px;font-size:11px;color:#2e2e2e;transform:scaleX(0.9665);">Click</span>
<span class="t" style="left:807.10px;top:406.00px;font-size:11px;color:#2e2e2e;transform:scaleX(0.8496);">XML</span>
<span class="t" style="left:529.80px;top:419.00px;font-size:11px;color:#2e2e2e;transform:scaleX(1.0000);">Maps</span>
<span class="t" style="left:561.40px;top:419.00px;font-size:11px;color:#2e2e2e;transform:scaleX(0.9891);">to</span>
<span class="t" style="left:574.70px;top:419.00px;font-size:11px;color:#2e2e2e;transform:scaleX(0.9457);">add</span>
<span class="t" style="left:597.00px;top:419.00px;font-size:11px;color:#2e2e2e;transform:scaleX(0.8852);">an</span>
<span class="t" style="left:613.50px;top:419.00px;font-size:11px;color:#2e2e2e;transform:scaleX(0.9071);">XML</span>
<span class="t" style="left:639.10px;top:419.00px;font-size:11px;color:#2e2e2e;transform:scaleX(0.9299);">map</span>
<span class="t" style="left:663.70px;top:419.00px;font-size:11px;color:#2e2e2e;transform:scaleX(0.9891);">to</span>
<span class="t" style="left:676.80px;top:419.00px;font-size:11px;color:#2e2e2e;transform:scaleX(1.0292);">this</span>
<span class="t" style="left:700.21px;top:419.00px;font-size:11px;color:#2e2e2e;transform:scaleX(1.0737);">workbook.</span>
<span class="t" style="left:535.20px;top:440.00px;font-size:11px;color:#2e2e2e;transform:scaleX(1.0818);">Options</span>
<span class="t" style="left:614.80px;top:440.00px;font-size:11px;color:#2e2e2e;transform:scaleX(0.9739);">XML Maps...</span>
<span class="t" style="left:529.80px;top:463.00px;font-size:11px;color:#a6a6a6;transform:scaleX(1.0364);">Verify</span>
<span class="t" style="left:562.20px;top:463.00px;font-size:11px;color:#a6a6a6;transform:scaleX(0.9953);">Map</span>
<span class="t" style="left:587.60px;top:463.00px;font-size:11px;color:#a6a6a6;transform:scaleX(1.0703);">for</span>
<span class="t" style="left:606.10px;top:463.00px;font-size:11px;color:#a6a6a6;transform:scaleX(1.0049);">Export...</span>
<div class="a" style="left:608px;top:475px;width:233px;height:19px;background:#fff;border:1px solid #d0d0d0;border-radius:2px;box-shadow:1px 2px 3px rgba(0,0,0,.35)"></div>
<span class="t" style="left:611.10px;top:479.00px;font-size:12.3px;color:#5e5e5e;transform:scaleX(0.9315);">Add</span>
<span class="t" style="left:636.50px;top:479.00px;font-size:12.3px;color:#5e5e5e;transform:scaleX(0.9358);">or</span>
<span class="t" style="left:650.40px;top:479.00px;font-size:12.3px;color:#5e5e5e;transform:scaleX(0.9537);">remove</span>
<span class="t" style="left:693.30px;top:479.00px;font-size:12.3px;color:#5e5e5e;transform:scaleX(0.9249);">XML</span>
<span class="t" style="left:720.30px;top:479.00px;font-size:12.3px;color:#5e5e5e;transform:scaleX(0.9369);">Maps</span>
<span class="t" style="left:752.80px;top:479.00px;font-size:12.3px;color:#5e5e5e;transform:scaleX(0.7188);">in</span>
<span class="t" style="left:764.40px;top:479.00px;font-size:12.3px;color:#5e5e5e;transform:scaleX(0.9686);">this</span>
<span class="t" style="left:787.20px;top:479.00px;font-size:12.3px;color:#5e5e5e;transform:scaleX(0.9848);">workbook</span>
<svg width="845" height="526" viewBox="0 0 845 526"><polygon points="734.5,390.3 688.5,430.5 682.8,428.3 679,441.1 694.2,436.5 691.5,434" fill="#fb0d1b"/></svg>
<div class="a" style="left:0;top:0;width:2px;height:526px;background:#217346"></div>
<div class="a" style="left:0;top:32px;width:1px;height:494px;background:#6f9c83"></div>
<div class="a" style="left:0;top:525px;width:845px;height:1px;background:#217346"></div>
<div class="a" style="left:0;top:524px;width:845px;height:1px;background:#7eab92"></div>
<div class="a" style="left:844px;top:0;width:1px;height:526px;background:#217346"></div>
<div class="a" style="left:843px;top:31px;width:1px;height:495px;background:#c9d9d0"></div>
</body>
</html>
